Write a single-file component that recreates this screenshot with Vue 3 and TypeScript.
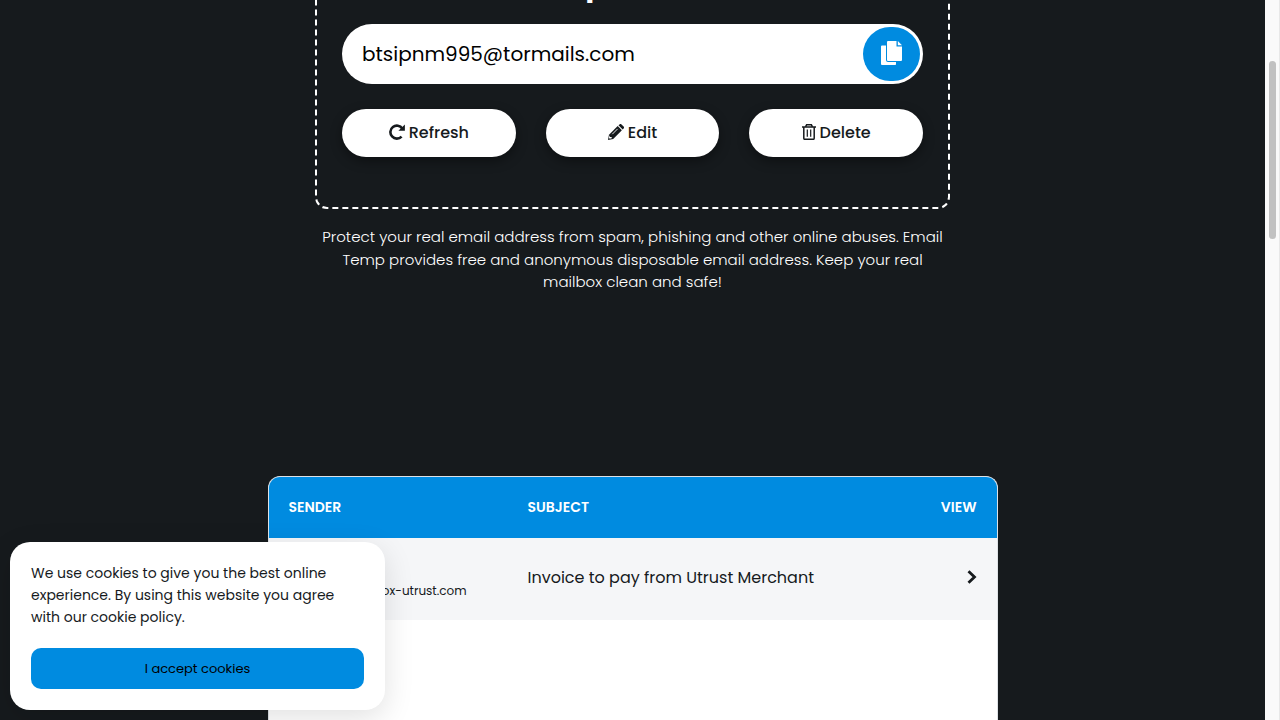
<script setup lang="ts">
import { ref } from 'vue'

interface Mail {
  name: string
  address: string
  subject: string
}

const email = ref('btsipnm995@tormails.com')
const cookiesOpen = ref(true)
const mails = ref<Mail[]>([
  { name: 'Utrust', address: 'support@mailbox-utrust.com', subject: 'Invoice to pay from Utrust Merchant' },
])

function copyAddress(): void {
  navigator.clipboard?.writeText(email.value)
}
</script>

<template>
  <div class="page">
    <main class="content">
      <section class="hero">
        <div class="box">
          <h1 class="title">Your Temp Mail Address</h1>
          <div class="address">
            <input v-model="email" class="address-input" type="text" aria-label="Email address" readonly />
            <button class="copy" type="button" aria-label="Copy" @click="copyAddress">
              <svg width="21" height="24" viewBox="0 0 21 24" fill="#fff">
                <path d="M1 4.500h4v14.500a2 2 0 0 0 2 2h8v2.200a.8.800 0 0 1-.8.800H1a1 1 0 0 1-1-1V5.500a1 1 0 0 1 1-1z" />
                <path d="M7 0h8.500v5.500h5.500V19a1 1 0 0 1-1 1H7a1 1 0 0 1-1-1V1a1 1 0 0 1 1-1z" />
                <path d="M16.800 0l4.200 4.200h-4.200z" />
              </svg>
            </button>
          </div>
          <div class="actions">
            <button class="action" type="button">
              <svg width="16" height="16" viewBox="0 0 16 16">
                <path d="M13.300 4.500A6.500 6.500 0 1 0 12.600 12.600" fill="none" stroke="#161a1d" stroke-width="2.600" />
                <path d="M15.900.5v6.300H9.400z" fill="#161a1d" />
              </svg>
              <span>Refresh</span>
            </button>
            <button class="action" type="button">
              <svg width="16" height="16" viewBox="0 0 16 16">
                <path d="M0 16l1-5.200L9.700 2.100l4.200 4.200L5.200 15z" fill="#161a1d" />
                <path d="M10.500 1.300L11.500.4a1.400 1.400 0 0 1 2 0l2.100 2.100a1.400 1.400 0 0 1 0 2l-.9 1z" fill="#161a1d" />
                <path d="M4.300 10.200l5.300-5.300" fill="none" stroke="#fff" stroke-width=".9" />
                <path d="M2 11.300v1.700h1.700v1.200l-1.900.5-1-1z" fill="#fff" />
              </svg>
              <span>Edit</span>
            </button>
            <button class="action" type="button">
              <svg width="14" height="16" viewBox="0 0 14 16" fill="none" stroke="#161a1d">
                <path d="M0 3h14" stroke-width="1.500" />
                <path d="M3.500 2.800L4.600.8h4.800l1.100 2" stroke-width="1.500" />
                <path d="M1.800 3v11.300a1 1 0 0 0 1 1h8.400a1 1 0 0 0 1-1V3" stroke-width="1.500" />
                <path d="M5.300 5.500v7.300M8.700 5.500v7.300" stroke-width="1.200" />
              </svg>
              <span>Delete</span>
            </button>
          </div>
        </div>
        <p class="intro">
          Protect your real email address from spam, phishing and other online abuses. Email<br />
          Temp provides free and anonymous disposable email address. Keep your real<br />
          mailbox clean and safe!
        </p>
      </section>

      <section class="inbox">
        <table class="mails">
          <thead>
            <tr>
              <th class="sender">Sender</th>
              <th>Subject</th>
              <th class="view">View</th>
            </tr>
          </thead>
          <tbody>
            <tr v-for="mail in mails" :key="mail.address">
              <td class="sender">
                <span class="name">{{ mail.name }}</span>
                <span class="from">{{ mail.address }}</span>
              </td>
              <td class="subject">{{ mail.subject }}</td>
              <td class="view">
                <a class="open" href="#" aria-label="View message">
                  <svg width="10" height="14" viewBox="0 0 10 14" fill="none" stroke="#161a1d" stroke-width="2.800">
                    <path d="M1.500 1.200L7.500 7l-6 5.800" />
                  </svg>
                </a>
              </td>
            </tr>
          </tbody>
        </table>
      </section>
    </main>

    <div class="track"><div class="thumb"></div></div>

    <aside v-if="cookiesOpen" class="cookies">
      <p class="cookies-text">
        We use cookies to give you the best online<br />
        experience. By using this website you agree<br />
        with our cookie policy.
      </p>
      <button class="accept" type="button" @click="cookiesOpen = false">I accept cookies</button>
    </aside>
  </div>
</template>

<style>
body {
  margin: 0;
  background: #161a1d;
}
</style>

<style scoped>
.page {
  position: relative;
  display: flex;
  height: 100vh;
  overflow: hidden;
  background: #161a1d;
  color: #161a1d;
  font-family: Poppins, Inter, "Liberation Sans", sans-serif;
}
.page * {
  box-sizing: border-box;
}
button,
input {
  font-family: inherit;
  border: 0;
}
button {
  cursor: pointer;
}
.content {
  flex: 1;
  display: flex;
  flex-direction: column;
  align-items: center;
}
.hero {
  width: 635px;
  max-width: 100%;
  margin-top: -100px;
  flex: none;
}
.box {
  padding: 50px 25px;
  border: 2px dashed #fff;
  border-radius: 12px;
}
.title {
  margin: 0 0 12px;
  color: #fff;
  font-size: 36px;
  line-height: 60px;
  font-weight: 600;
  text-align: center;
}
.address {
  display: flex;
  height: 60px;
  padding: 3px;
  border-radius: 30px;
  background: #fff;
}
.address-input {
  flex: 1;
  min-width: 0;
  padding: 0 17px;
  background: transparent;
  color: #000;
  font-size: 20px;
  outline: 0;
}
.copy {
  display: flex;
  align-items: center;
  justify-content: center;
  width: 57px;
  padding: 0 0 2px;
  border-radius: 30px;
  background: #008be0;
}
.actions {
  display: grid;
  grid-template-columns: repeat(3, 1fr);
  gap: 30px;
  margin-top: 25px;
}
.action {
  display: flex;
  align-items: center;
  justify-content: center;
  gap: 4px;
  height: 48px;
  padding: 0 0 2px;
  border-radius: 24px;
  background: #fff;
  color: #161a1d;
  font-size: 16px;
  font-weight: 500;
  box-shadow: 0 4px 12px rgba(0, 0, 0, 0.4);
}
.intro {
  margin: 17px 0 0;
  color: #fff;
  font-size: 15px;
  font-weight: 300;
  line-height: 1.5;
  text-align: center;
  white-space: nowrap;
}
.inbox {
  flex: 1 0 auto;
  width: 730px;
  max-width: 100%;
  margin-top: 182px;
  border: 1px solid #dee2e6;
  border-bottom: 0;
  border-radius: 12px 12px 0 0;
  background: #fff;
  overflow: hidden;
}
.mails {
  width: 100%;
  border-collapse: collapse;
  text-align: left;
}
th {
  height: 61px;
  padding: 0 20px;
  background: #008be0;
  color: #fff;
  font-size: 14px;
  font-weight: 600;
  text-transform: uppercase;
}
td {
  height: 82px;
  padding: 0 20px 2px;
  background: #f5f6f8;
}
.sender {
  width: 239px;
}
.view {
  width: 100px;
  padding-bottom: 0;
  text-align: right;
}
.name,
.from {
  display: block;
  font-size: 12px;
  line-height: 26px;
}
.name {
  font-size: 16px;
}
.subject {
  font-size: 16px;
}
.open {
  display: inline-block;
}
.open svg {
  display: block;
}
.track {
  width: 15px;
  padding: 61px 3px 0 4px;
  border-right: 1px solid #e8e8e8;
  background: #fafafa;
}
.thumb {
  height: 178px;
  border-radius: 4px;
  background: #c1c1c1;
}
.cookies {
  position: absolute;
  left: 10px;
  bottom: 10px;
  width: 375px;
  padding: 20px 21px 21px;
  border-radius: 20px;
  background: #fff;
  box-shadow: 0 8px 30px rgba(0, 0, 0, 0.12);
}
.cookies-text {
  margin: 0 0 20px;
  font-size: 14px;
  line-height: 22px;
  white-space: nowrap;
}
.accept {
  width: 100%;
  height: 41px;
  border-radius: 10px;
  background: #008be0;
  color: #000;
  font-size: 13px;
}
</style>
